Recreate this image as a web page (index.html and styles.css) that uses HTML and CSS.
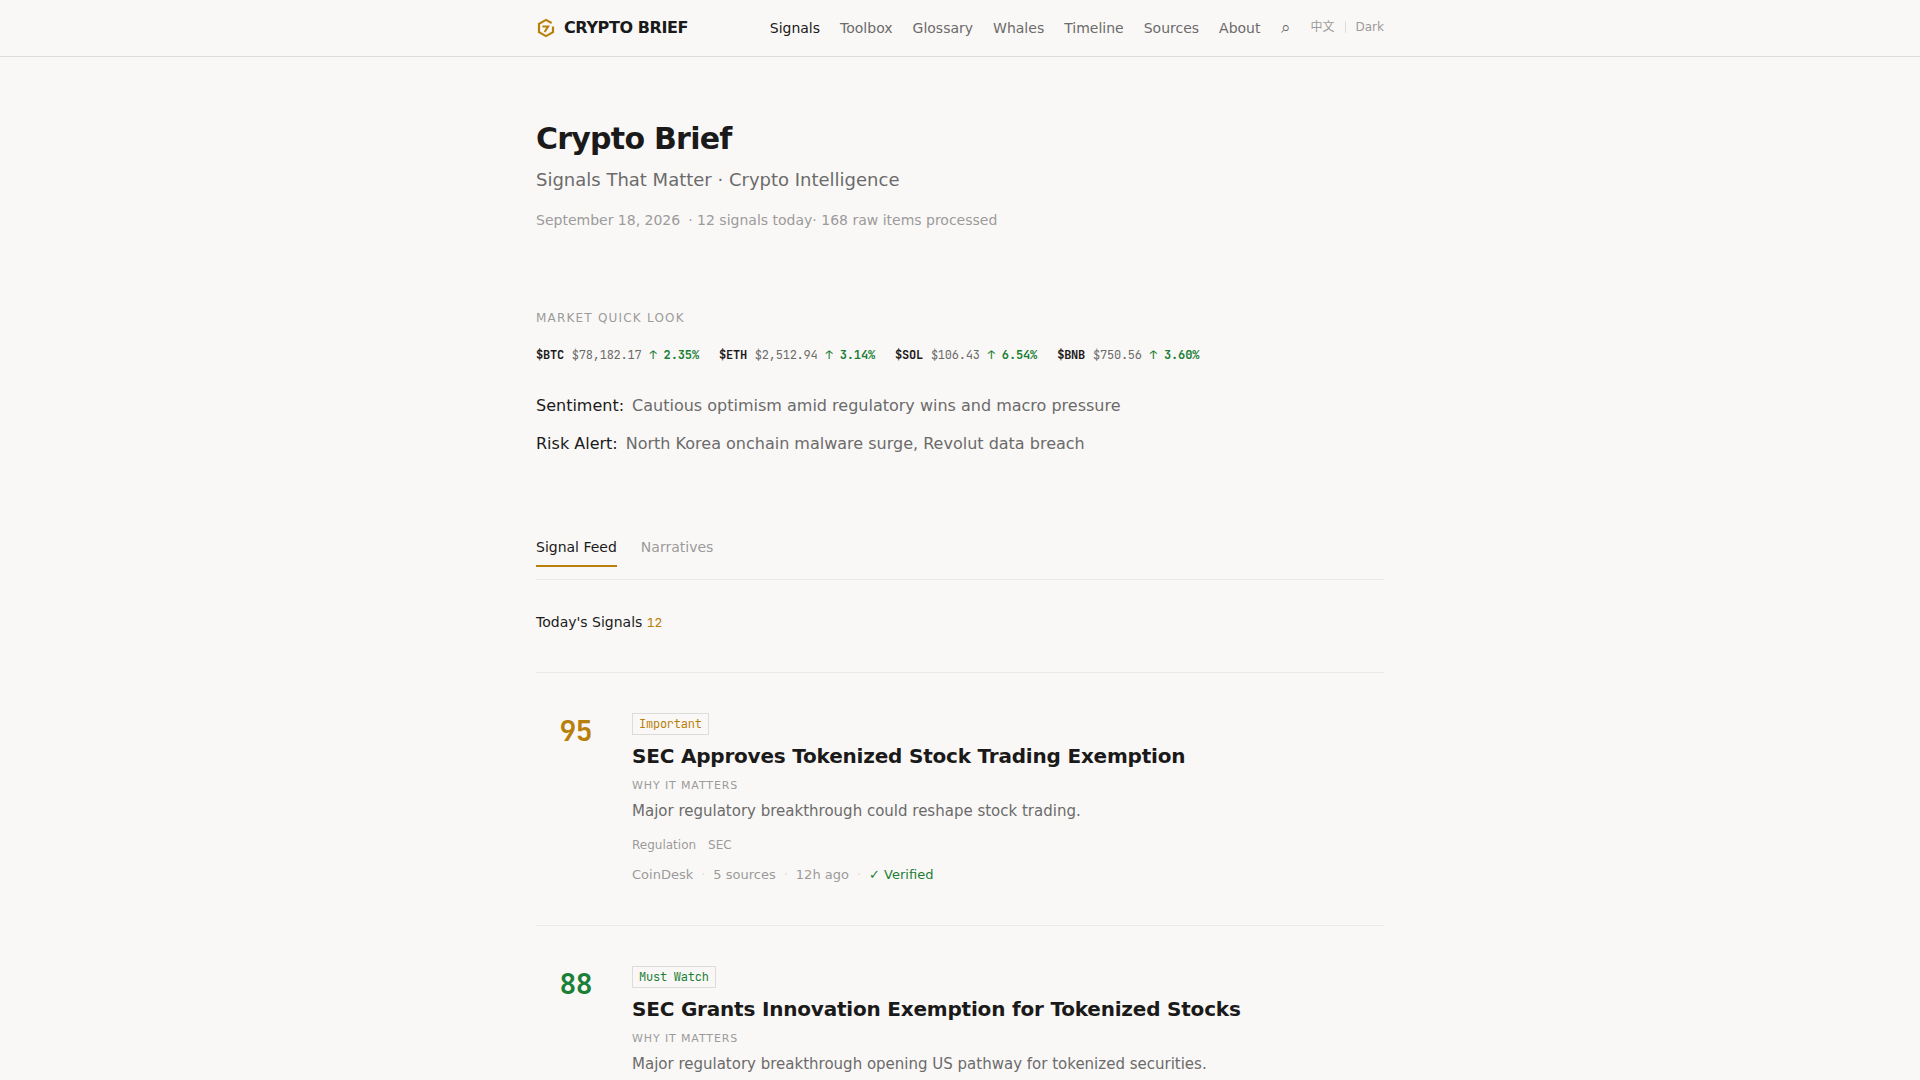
FILE: index.html
```html
<!DOCTYPE html>
<html lang="en">
<head>
<meta charset="utf-8">
<meta name="viewport" content="width=device-width, initial-scale=1">
<title>Crypto Brief</title>
<link rel="stylesheet" href="styles.css">
</head>
<body>
<header class="site-header">
  <div class="container header-inner">
    <a class="brand" href="#">
      <svg class="brand-icon" viewBox="0 0 20 20" fill="none" stroke="currentColor" stroke-width="2.2" aria-hidden="true">
        <path d="M15.6 5 10 1.9 3 5.9v8.2l7 4 7-4V8.6"/>
        <path d="M6.4 8.4h5.8L8.6 14" stroke-width="2"/>
      </svg>
      <span>CRYPTO BRIEF</span>
    </a>
    <nav class="nav" aria-label="Main">
      <a class="active" href="#">Signals</a>
      <a href="#">Toolbox</a>
      <a href="#">Glossary</a>
      <a href="#">Whales</a>
      <a href="#">Timeline</a>
      <a href="#">Sources</a>
      <a href="#">About</a>
      <button class="search" type="button" aria-label="Search">⌕</button>
      <div class="prefs">
        <a href="#" lang="zh">中文</a>
        <span class="pref-divider"></span>
        <button type="button">Dark</button>
      </div>
    </nav>
  </div>
</header>
<main class="container">
  <section class="hero">
    <h1>Crypto Brief</h1>
    <p class="tagline">Signals That Matter · Crypto Intelligence</p>
    <p class="dateline"><time datetime="2026-09-18">September 18, 2026</time><span>· 12 signals today</span><span>· 168 raw items processed</span></p>
  </section>
  <section class="market">
    <h2 class="eyebrow">Market Quick Look</h2>
    <div class="tickers">
      <div><b>$BTC</b><span>$78,182.17</span><strong>↑ 2.35%</strong></div>
      <div><b>$ETH</b><span>$2,512.94</span><strong>↑ 3.14%</strong></div>
      <div><b>$SOL</b><span>$106.43</span><strong>↑ 6.54%</strong></div>
      <div><b>$BNB</b><span>$750.56</span><strong>↑ 3.60%</strong></div>
    </div>
    <dl class="mood">
      <div><dt>Sentiment:</dt><dd>Cautious optimism amid regulatory wins and macro pressure</dd></div>
      <div><dt>Risk Alert:</dt><dd>North Korea onchain malware surge, Revolut data breach</dd></div>
    </dl>
  </section>
  <div class="tabs">
    <button class="tab active" type="button">Signal Feed</button>
    <button class="tab" type="button">Narratives</button>
  </div>
  <h2 class="feed-title">Today's Signals <span>12</span></h2>
  <article class="signal important">
    <div class="score">95</div>
    <div class="signal-body">
      <span class="badge">Important</span>
      <h3>SEC Approves Tokenized Stock Trading Exemption</h3>
      <p class="why">Why it matters</p>
      <p class="summary">Major regulatory breakthrough could reshape stock trading.</p>
      <div class="tags"><span>Regulation</span><span>SEC</span></div>
      <div class="meta"><span>CoinDesk</span><i>·</i><span>5 sources</span><i>·</i><span>12h ago</span><i>·</i><span class="verified">✓ Verified</span></div>
    </div>
  </article>
  <article class="signal must-watch">
    <div class="score">88</div>
    <div class="signal-body">
      <span class="badge">Must Watch</span>
      <h3>SEC Grants Innovation Exemption for Tokenized Stocks</h3>
      <p class="why">Why it matters</p>
      <p class="summary">Major regulatory breakthrough opening US pathway for tokenized securities.</p>
    </div>
  </article>
</main>
</body>
</html>
```
FILE: styles.css
```css
:root {
  --bg: #faf8f6;
  --ink: #1a1a1a;
  --body: #6b6b6b;
  --muted: #9b9b9b;
  --line: #ebebe9;
  --line-strong: #dcdcda;
  --gold: #b8800b;
  --green: #1a7f37;
  --sans: "DejaVu Sans", "Noto Sans CJK SC", sans-serif;
  --mono: "JetBrains Mono", "DejaVu Sans Mono", monospace;
}
* { box-sizing: border-box; margin: 0; padding: 0; }
body { background: var(--bg); color: var(--ink); font: 16px/24px var(--sans); }
a { color: inherit; text-decoration: none; }
button { border: 0; background: none; color: inherit; font: inherit; cursor: pointer; }
.container { max-width: 896px; margin: 0 auto; padding: 0 24px; }
.site-header { border-bottom: 1px solid var(--line-strong); }
.header-inner { display: flex; align-items: center; justify-content: space-between; height: 56px; }
.brand { display: flex; align-items: center; gap: 8px; font-weight: 700; letter-spacing: -0.025em; }
.brand-icon { width: 20px; height: 20px; color: var(--gold); }
.nav { display: flex; align-items: center; gap: 20px; color: var(--body); font-size: 14px; }
.nav .active { color: var(--ink); }
.search { padding-bottom: 2px; font-size: 17px; }
.prefs { display: flex; align-items: center; gap: 10px; padding-bottom: 2px; color: var(--muted); font-size: 12px; }
.pref-divider { width: 1px; height: 12px; background: var(--line-strong); }

.hero { padding-top: 60px; }
h1 { font-size: 30px; line-height: 44px; letter-spacing: -0.025em; }
.tagline { margin-top: 5px; color: var(--body); font-size: 18px; line-height: 28px; }
.dateline { display: flex; margin-top: 14px; color: var(--muted); font-size: 14px; }
.dateline time { margin-right: 8px; }

.market { padding-top: 74px; }
.eyebrow { color: var(--muted); font-size: 12px; font-weight: 400; letter-spacing: 0.1em; text-transform: uppercase; }
.tickers { display: flex; flex-wrap: wrap; gap: 20px; margin-top: 13px; color: var(--body); font: 12px/24px var(--mono); letter-spacing: -0.02em; }
.tickers div { display: flex; gap: 8px; }
.tickers b { color: var(--ink); }
.tickers strong { color: var(--green); letter-spacing: -0.01em; }
.mood { display: grid; gap: 14px; margin-top: 27px; }
.mood div { display: flex; gap: 8px; }
.mood dd { color: var(--body); }

.tabs { display: flex; gap: 24px; margin-top: 81px; padding-bottom: 12px; border-bottom: 1px solid var(--line); font-size: 14px; line-height: 20px; }
.tab { padding-bottom: 8px; border-bottom: 2px solid transparent; color: var(--muted); }
.tab.active { border-color: var(--gold); color: var(--ink); }
.feed-title { margin: 30px 0 38px; font-size: 14px; font-weight: 400; }
.feed-title span { color: var(--gold); font: 13px var(--mono); letter-spacing: -0.02em; }

.signal { display: grid; grid-template-columns: 56px 1fr; gap: 40px; padding: 40px 0; border-top: 1px solid var(--line); }
.score { color: var(--accent); font: 700 28px/36px var(--mono); letter-spacing: -0.02em; text-align: right; }
.important { --accent: var(--gold); }
.must-watch { --accent: var(--green); }
.signal-body { display: flex; flex-direction: column; align-items: flex-start; }
.badge { padding: 2px 6px; border: 1px solid var(--line-strong); color: var(--accent); font: 12px/16px var(--mono); letter-spacing: -0.02em; }
h3 { margin-top: 7px; font-size: 20px; line-height: 28px; letter-spacing: -0.01em; }
.why { margin-top: 7px; color: var(--muted); font-size: 11px; line-height: 18px; letter-spacing: 0.08em; text-transform: uppercase; }
.summary { margin-top: 4px; color: var(--body); font-size: 15px; }
.tags { display: flex; gap: 12px; margin-top: 12px; color: var(--muted); font-size: 12px; line-height: 20px; }
.meta { display: flex; gap: 8px; margin-top: 10px; color: var(--muted); font-size: 13px; line-height: 20px; }
.meta i { color: var(--line-strong); font-style: normal; }
.meta .verified { color: var(--green); }
```
